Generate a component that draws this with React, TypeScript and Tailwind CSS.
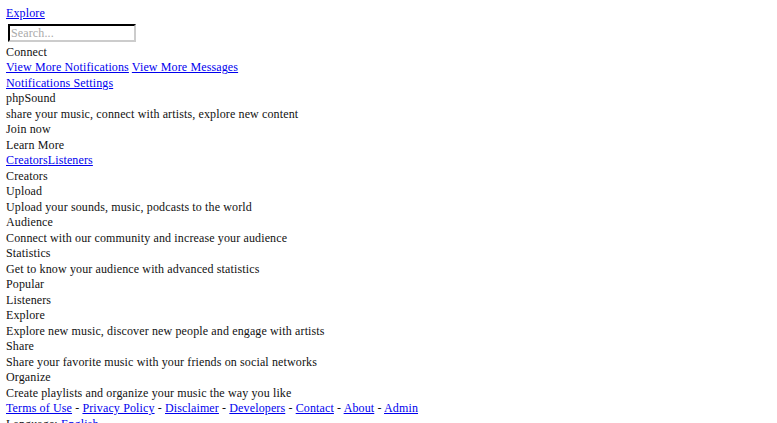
export default function App() {
  const L = "text-[#0000ee] underline";
  const line = "h-[15.5px] leading-[15.5px] whitespace-nowrap";
  return (
    <div className="pl-[6px] pt-[6px] text-[12px] tracking-[0.13px] text-[#111] bg-white min-h-[423px] overflow-hidden" style={{ fontFamily: '"Liberation Serif", serif' }}>
      <div className={line}><a href="#" className={L}>Explore</a></div>
      <div className="h-[23px] flex items-center">
        <input placeholder="Search..." className="ml-[2px] w-[128px] h-[18px] border-2 border-t-[#555] border-l-[#555] border-r-[#ccc] border-b-[#ccc] text-[12px] px-[1px] placeholder:text-[#aaa]" style={{ borderStyle: "inset" }} />
      </div>
      <div className={line}>Connect</div>
      <div className={line}><a href="#" className={L}>View More Notifications</a> <a href="#" className={L}>View More Messages</a></div>
      <div className={line}><a href="#" className={L}>Notifications Settings</a></div>
      <div className={line}>phpSound</div>
      <div className={line}>share your music, connect with artists, explore new content</div>
      <div className={line}>Join now</div>
      <div className={line}>Learn More</div>
      <div className={line}><a href="#" className={L}>Creators</a><a href="#" className={L}>Listeners</a></div>
      <div className={line}>Creators</div>
      <div className={line}>Upload</div>
      <div className={line}>Upload your sounds, music, podcasts to the world</div>
      <div className={line}>Audience</div>
      <div className={line}>Connect with our community and increase your audience</div>
      <div className={line}>Statistics</div>
      <div className={line}>Get to know your audience with advanced statistics</div>
      <div className={line}>Popular</div>
      <div className={line}>Listeners</div>
      <div className={line}>Explore</div>
      <div className={line}>Explore new music, discover new people and engage with artists</div>
      <div className={line}>Share</div>
      <div className={line}>Share your favorite music with your friends on social networks</div>
      <div className={line}>Organize</div>
      <div className={line}>Create playlists and organize your music the way you like</div>
      <div className={line}>
        <a href="#" className={L}>Terms of Use</a> - <a href="#" className={L}>Privacy Policy</a> - <a href="#" className={L}>Disclaimer</a> - <a href="#" className={L}>Developers</a> - <a href="#" className={L}>Contact</a> - <a href="#" className={L}>About</a> - <a href="#" className={L}>Admin</a>
      </div>
      <div className={line}>Language: <a href="#" className={L}>English</a></div>
    </div>
  );
}
